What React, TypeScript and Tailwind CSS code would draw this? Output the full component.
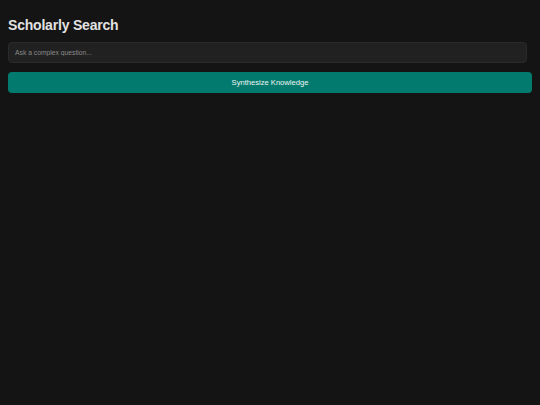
export default function App() {
  return (
    <div className="min-h-[405px] w-full bg-[#141414] px-2 pt-[15px] font-['Liberation_Sans',Arial,sans-serif]">
      <h1 className="text-[14px] leading-[20px] font-bold tracking-[-0.2px] text-[#e2e2e2]">Scholarly Search</h1>
      <div className="mt-[7px] flex flex-col gap-[9px]">
        <input
          type="text"
          placeholder="Ask a complex question..."
          className="h-[21px] w-[519px] rounded-[4px] border border-[#2a2a2a] bg-[#212121] px-[6px] text-[6.75px] text-[#ddd] outline-none placeholder:text-[#8a8a8a]"
        />
        <button className="h-[21px] w-full rounded-[4px] bg-[#037a6e] text-[7.6px] text-[#eef7f5]">
          Synthesize Knowledge
        </button>
      </div>
    </div>
  );
}
